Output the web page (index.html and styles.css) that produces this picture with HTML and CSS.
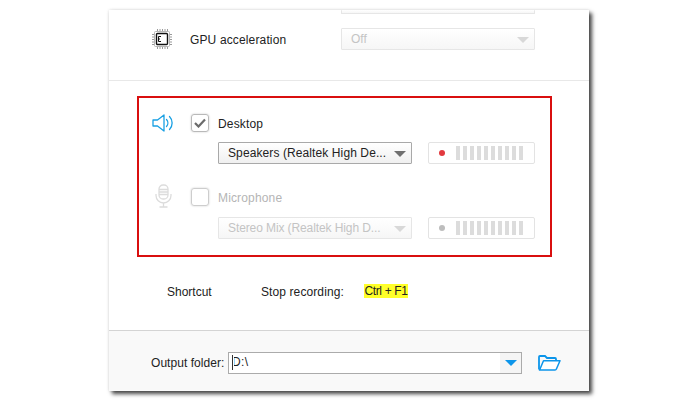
FILE: index.html
```html
<!DOCTYPE html>
<html lang="en">
<head>
<meta charset="utf-8">
<title>Recorder settings</title>
<link rel="stylesheet" href="styles.css">
</head>
<body>
<main class="window">
  <section class="top">
    <div class="select disabled cut"></div>
    <div class="gpu-row">
      <svg class="chip" width="20" height="20" viewBox="0 0 20 20" aria-hidden="true">
        <g stroke="#9a9a9a" stroke-width="1">
          <path d="M5.5 0v3M8 0v3M10.5 0v3M13 0v3M15.5 0v3M5.5 17v3M8 17v3M10.5 17v3M13 17v3M15.5 17v3M0 5.5h3M0 8h3M0 10.5h3M0 13h3M0 15.5h3M17 5.5h3M17 8h3M17 10.5h3M17 13h3M17 15.5h3"/>
        </g>
        <rect x="2.5" y="2.5" width="15" height="15" rx="1" fill="#fff" stroke="#b5b5b5"/>
        <rect x="4.5" y="4.5" width="11" height="11" rx="1" fill="#fff" stroke="#111" stroke-width="1.4"/>
        <path d="M9 7.5H6.5v5H9M6.5 10H8" fill="none" stroke="#111" stroke-width="1"/>
      </svg>
      <span class="gpu-label">GPU acceleration</span>
      <div class="select disabled"><span class="select-text">Off</span><i class="arrow"></i></div>
    </div>
  </section>

  <section class="audio">
    <svg class="icon-speaker" width="23" height="18" viewBox="0 0 23 18" aria-hidden="true">
      <path d="M1 6h4.500L12 1v16l-6.500-5H1z" fill="#fff" stroke="#19a0e3" stroke-width="1.300" stroke-linejoin="round"/>
      <path d="M14.500 5.500c1.800 2 1.800 5 0 7M17.500 2.500c3.500 3.600 3.500 9.400 0 13" fill="none" stroke="#19a0e3" stroke-width="1.300" stroke-linecap="round"/>
    </svg>
    <span class="check on">
      <svg width="12" height="10" viewBox="0 0 12 10" aria-hidden="true"><path d="M1 5l3.500 3.500L11 1.500" fill="none" stroke="#6b6b6b" stroke-width="2.200"/></svg>
    </span>
    <span class="label">Desktop</span>
    <div class="select active device"><span class="select-text wide">Speakers (Realtek High De...</span><i class="arrow"></i></div>
    <div class="meter device-meter"><i class="dot red"></i><span class="bars"><i></i><i></i><i></i><i></i><i></i><i></i><i></i><i></i><i></i><i></i></span></div>

    <svg class="icon-mic" width="17" height="24" viewBox="0 0 17 24" aria-hidden="true">
      <g fill="none" stroke="#dcdcdc" stroke-width="1.300">
        <rect x="4" y="1" width="9" height="14" rx="4" />
        <path d="M4 5.500h9M4 8h9M4 10.500h9"/>
        <path d="M1 10v1.500a7.500 7.500 0 0 0 15 0V10M8.500 19v4M4.500 23h8"/>
      </g>
    </svg>
    <span class="check off"></span>
    <span class="label muted">Microphone</span>
    <div class="select disabled device lower"><span class="select-text narrow">Stereo Mix (Realtek High D...</span><i class="arrow"></i></div>
    <div class="meter device-meter lower"><i class="dot grey"></i><span class="bars"><i></i><i></i><i></i><i></i><i></i><i></i><i></i><i></i><i></i><i></i></span></div>
  </section>

  <section class="shortcut">
    <span class="shortcut-title">Shortcut</span>
    <span class="shortcut-name">Stop recording:</span>
    <mark class="keys">Ctrl + F1</mark>
  </section>

  <footer class="footer">
    <span class="output-label">Output folder:</span>
    <div class="path">
      <span class="path-text"><i class="caret"></i>D:\</span>
      <span class="path-btn"><i class="arrow blue"></i></span>
    </div>
    <svg class="folder" width="23" height="16" viewBox="0 0 23 16" aria-hidden="true">
      <path d="M1 14.500V2q0-1 1-1h5l2 2h8q1 0 1 1v1.500" fill="none" stroke="#0c95ea" stroke-width="1.800"/>
      <path d="M1.500 15h15.500q1 0 1.400-1L22 5.800H5.500L2 14z" fill="#fff" stroke="#0c95ea" stroke-width="1.500" stroke-linejoin="round"/>
    </svg>
  </footer>
</main>
</body>
</html>
```
FILE: styles.css
```css
* { box-sizing: border-box; }
html, body { margin: 0; padding: 0; background: #fff; }
body {
  width: 700px;
  height: 405px;
  overflow: hidden;
  font-family: "Liberation Sans", Arial, sans-serif;
  font-size: 12px;
  color: #222;
}
.window {
  width: 480px;
  height: 381px;
  margin: 10px 0 0 109px;
  background: #fff;
  box-shadow: 3px 3px 4px rgba(0, 0, 0, .72), 0 0 3px rgba(0, 0, 0, .14);
  display: flex;
  flex-direction: column;
  overflow: hidden;
}
.top {
  height: 71px;
  flex: none;
  border-bottom: 1px solid #e8e8e8;
  padding-left: 232px;
}
.select {
  position: relative;
  display: flex;
  align-items: center;
  width: 194px;
  height: 22px;
  padding-left: 9px;
  border: 1px solid #a9a9a9;
  border-radius: 1px;
  background: linear-gradient(#fff, #f0f0f0);
}
.select.disabled { border-color: #e6e6e6; background: linear-gradient(#fff, #f6f6f6); color: #c4c4c4; }
.select.cut { height: 4px; margin-bottom: 14px; border-top: 0; }
.select-text.wide { letter-spacing: .1px; }
.select-text.narrow { letter-spacing: -.1px; }
.arrow {
  position: absolute;
  right: 5px;
  top: 8px;
  width: 0;
  height: 0;
  border-left: 6px solid transparent;
  border-right: 6px solid transparent;
  border-top: 6px solid #707070;
}
.select.disabled .arrow { border-top-color: #d8d8d8; }
.gpu-row {
  display: flex;
  align-items: center;
  height: 22px;
  margin-left: -189px;
}
.chip { flex: none; margin-right: 18px; }
.gpu-label { width: 151px; flex: none; padding-top: 2px; letter-spacing: .14px; }

.audio {
  display: grid;
  grid-template-columns: 52px 27px 194px 16px 107px;
  grid-template-rows: 18px 32px 42px 33px;
  align-items: end;
  align-self: flex-start;
  width: 415px;
  height: 161px;
  margin: 15px 0 0 28px;
  padding: 16px 0;
  border: 2px solid #d90f0f;
}
.icon-speaker { grid-row: 1; grid-column: 1; margin-left: 13px; }
.icon-mic { grid-row: 3; grid-column: 1; margin: 0 0 -2px 16px; }
.check {
  width: 18px;
  height: 18px;
  border: 1px solid #cdcdcd;
  border-radius: 3px;
  display: flex;
  align-items: center;
  justify-content: center;
  box-shadow: 0 0 2px rgba(0, 0, 0, .22);
}
.check.on { grid-row: 1; grid-column: 2; border-color: #b9b9b9; }
.check.off { grid-row: 3; grid-column: 2; }
.label { grid-column: 3 / 6; letter-spacing: .15px; line-height: 16px; }
.audio .label { grid-row: 1; }
.audio .label.muted { grid-row: 3; color: #b5b5b5; }
.device { grid-column: 3; grid-row: 2; }
.device-meter { grid-column: 5; grid-row: 2; }
.device.lower, .device-meter.lower { grid-row: 4; }
.meter {
  display: flex;
  align-items: center;
  height: 22px;
  border: 1px solid #e3e3e3;
  border-radius: 2px;
  padding-left: 10px;
}
.dot { width: 6px; height: 6px; border-radius: 50%; margin-right: 11px; }
.dot.red { background: #e23a3f; }
.dot.grey { background: #bdbdbd; }
.bars { display: flex; gap: 3px; }
.bars i { display: block; width: 4px; height: 14px; background: #dcdcdc; }

.shortcut {
  display: flex;
  align-items: center;
  height: 14px;
  margin: 27px 0 0 58px;
}
.shortcut-title { width: 94px; padding-top: 2px; }
.shortcut-name { width: 103px; padding-top: 2px; letter-spacing: .1px; }
.keys { background: #ffff2a; color: #222; height: 14px; width: 44px; line-height: 15px; text-align: center; white-space: nowrap; letter-spacing: -.35px; }

.footer {
  display: flex;
  align-items: center;
  margin-top: 32px;
  height: 61px;
  flex: none;
  padding: 3px 0 0 42px;
  border-top: 1px solid #d4d4d4;
  background: #f9f9f9;
}
.output-label { width: 77px; flex: none; letter-spacing: .05px; }
.path {
  display: flex;
  justify-content: space-between;
  width: 294px;
  height: 22px;
  border: 1px solid #ababab;
  background: #fff;
}
.path-text { position: relative; padding: 2px 0 0 3px; letter-spacing: .4px; }
.caret { position: absolute; left: 3px; top: 2px; width: 2px; height: 15px; background: #fff; border-left: 1px solid #333; }
.path-btn { position: relative; width: 21px; background: #f5f5f5; }
.arrow.blue { border-top-color: #0c95ea; right: 4px; top: 7px; }
.folder { flex: none; margin-left: 16px; }
```
